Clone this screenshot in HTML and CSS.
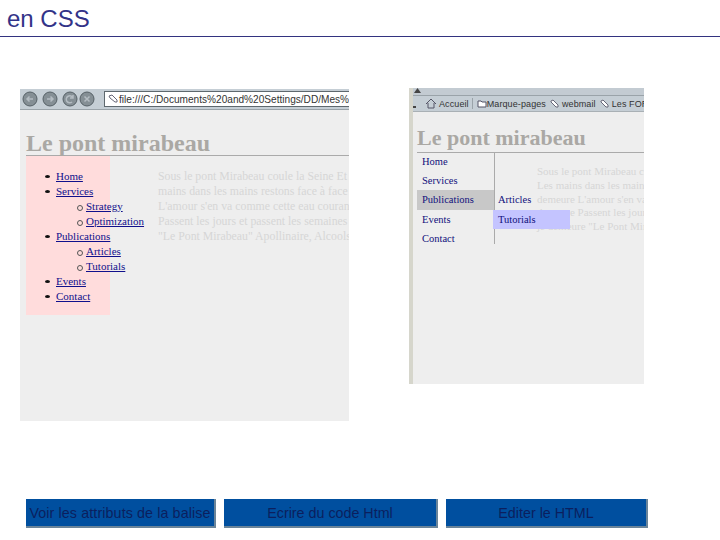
FILE: index.html
```html
<!DOCTYPE html>
<html lang="fr">
<head>
<meta charset="utf-8">
<title>en CSS</title>
<link rel="stylesheet" href="styles.css">
</head>
<body>
<div class="slide">
  <header class="head"><h1>en CSS</h1></header>
  <main class="shots">
    <section class="shot shot-a">
      <div class="nav-bar">
        <svg class="nav-icons" width="82" height="18" viewBox="0 0 82 18">
          <g fill="#858f95" stroke="#566066"><circle cx="9" cy="9" r="7"/><circle cx="29" cy="9" r="7"/><circle cx="49" cy="9" r="7"/><circle cx="66" cy="9" r="7"/></g>
          <g fill="none" stroke="#b4bcc2" stroke-width="1.5"><path d="M12 9H6M8.500 6.500 6 9l2.500 2.500"/><path d="M26 9h6M29.500 6.500 32 9l-2.500 2.500"/><path d="M52 8a3.500 3.500 0 1 0-1 4M52 5v3h-3"/><path d="m63.500 6.500 5 5m0-5-5 5"/></g>
        </svg>
        <div class="address">
          <svg width="12" height="10" viewBox="0 0 12 10"><path d="M2 2l3-1 5 5v2H8L3 4z" fill="#fff" stroke="#667"/></svg>
          <span>file:///C:/Documents%20and%20Settings/DD/Mes%2</span>
        </div>
      </div>
      <div class="page">
        <h2 class="page-title">Le pont mirabeau</h2>
        <div class="page-body">
          <nav class="side">
            <ul class="tree">
              <li><a>Home</a></li>
              <li><a>Services</a>
                <ul><li><a>Strategy</a></li><li><a>Optimization</a></li></ul>
              </li>
              <li><a>Publications</a>
                <ul><li><a>Articles</a></li><li><a>Tutorials</a></li></ul>
              </li>
              <li><a>Events</a></li>
              <li><a>Contact</a></li>
            </ul>
          </nav>
          <p class="poem">Sous le pont Mirabeau coule la Seine Et nos amours<br>mains dans les mains restons face à face Tandis que<br>L'amour s'en va comme cette eau courante L'amour<br>Passent les jours et passent les semaines Ni temps<br>"Le Pont Mirabeau" Apollinaire, Alcools (1913)</p>
        </div>
      </div>
    </section>

    <section class="shot shot-b">
      <div class="chrome-top"><svg class="scroll-up" width="7" height="5" viewBox="0 0 7 5"><path d="M3.500 0 7 5H0z" fill="#444"/></svg></div>
      <div class="bookmarks">
        <i class="scroll-mark"></i>
        <span class="bm-first">
          <svg width="12" height="11" viewBox="0 0 12 11"><path d="M1 6l5-5 5 5M3 5v5h6V5" fill="none" stroke="#556"/></svg>
          Accueil
        </span>
        <span class="bm-tight">
          <svg width="10" height="9" viewBox="0 0 10 9"><path d="M1 2h3l1 1h4v5H1z" fill="#fff" stroke="#556"/></svg>Marque-pages
        </span>
        <span>
          <svg width="10" height="10" viewBox="0 0 10 10"><path d="M1 2l2-1 5 5v2H6L1 3z" fill="#fff" stroke="#667"/></svg>
          webmail
        </span>
        <span>
          <svg width="10" height="10" viewBox="0 0 10 10"><path d="M1 2l2-1 5 5v2H6L1 3z" fill="#fff" stroke="#667"/></svg>
          Les FORUMS
        </span>
      </div>
      <div class="page-b">
        <h2 class="page-title title-b">Le pont mirabeau</h2>
        <div class="body-b">
          <ul class="menu">
            <li>Home</li>
            <li>Services</li>
            <li class="is-open">Publications
              <ul class="flyout">
                <li>Articles</li>
                <li class="is-hover">Tutorials</li>
              </ul>
            </li>
            <li>Events</li>
            <li>Contact</li>
          </ul>
          <p class="poem poem-b">Sous le pont Mirabeau coule la<br>Les mains dans les mains restons<br>demeure L'amour s'en va comme<br>demeure Passent les jours et<br>je demeure "Le Pont Mirabeau"</p>
        </div>
      </div>
    </section>
  </main>
  <footer class="actions">
    <a class="btn btn-1">Voir les attributs de la balise</a>
    <a class="btn btn-2">Ecrire du code Html</a>
    <a class="btn btn-3">Editer le HTML</a>
  </footer>
</div>
</body>
</html>
```

FILE: styles.css
```css
* { box-sizing: border-box; }
html, body { margin: 0; padding: 0; background: #fff; }
.slide { width: 720px; height: 540px; overflow: hidden; display: flex; flex-direction: column; font-family: "Liberation Sans", Arial, sans-serif; }

.head { height: 37px; border-bottom: 1px solid #333380; padding: 5px 0 0 7px; }
.head h1 { margin: 0; font-size: 24px; line-height: 27px; font-weight: 400; color: #333388; }

.shots { height: 347px; padding: 52px 0 0 20px; display: flex; align-items: flex-start; }
.shot { overflow: hidden; background: #eeeeee; flex: none; }
.shot-a { width: 329px; height: 332px; }
.shot-b { width: 235px; height: 296px; margin: -1px 0 0 60px; border-left: 4px solid #d6d6cc; }

.nav-bar { height: 21px; background: #c5ced5; border-bottom: 1px solid #9aa3a9; display: flex; align-items: center; }
.nav-icons { flex: none; margin-left: 1px; }
.address { margin-left: 1px; flex: 1; height: 16px; background: #fff; border: 1px solid #5e686e; border-right: 0; padding-left: 2px; display: flex; align-items: center; white-space: nowrap; overflow: hidden; font-size: 10.100px; color: #333; }
.address svg { flex: none; }

.page { padding: 21px 0 0 6px; }
.page-title { margin: 0; font-family: "Liberation Serif", "Times New Roman", serif; font-size: 24px; line-height: 24px; font-weight: 700; color: #aaa8a4; white-space: nowrap; border-bottom: 1px solid #aaaaaa; }
.page-body { display: flex; }

.side { width: 84px; height: 159px; flex: none; background: #ffdcdc; padding-top: 13px; }
.tree, .tree ul { list-style: none; margin: 0; padding: 0; font-family: "Liberation Serif", "Times New Roman", serif; font-size: 11px; line-height: 15px; white-space: nowrap; }
.tree > li { padding-left: 30px; position: relative; }
.tree > li::before { content: ""; position: absolute; left: 19px; top: 6px; width: 5px; height: 3px; border-radius: 50%; background: #111; }
.tree ul li { padding-left: 30px; position: relative; }
.tree ul li::before { content: ""; position: absolute; left: 21px; top: 6px; width: 4px; height: 4px; border-radius: 50%; border: 1px solid #555; }
.tree a { color: #10108c; text-decoration: underline; }

.poem { margin: 0 0 0 48px; padding-top: 13px; font-family: "Liberation Serif", "Times New Roman", serif; font-size: 11.800px; line-height: 15px; color: #d6d6d6; white-space: nowrap; }

.chrome-top { height: 8px; background: #c3cbd2; border-bottom: 1px solid #9aa3a9; padding-left: 1px; display: flex; align-items: flex-start; }
.scroll-up { display: block; flex: none; }
.bookmarks { height: 16px; background: #c5ced5; border-bottom: 1px solid #a9b0b5; display: flex; align-items: center; gap: 4px; font-size: 9px; letter-spacing: .1px; color: #333; white-space: nowrap; overflow: hidden; }
.bookmarks span { display: flex; align-items: center; gap: 2px; }
.bookmarks .bm-first { padding-right: 3px; border-right: 1px solid #9aa3a9; }
.bookmarks .bm-tight { gap: 0; }
.scroll-mark { flex: none; width: 3px; height: 2px; margin: 6px 5px 0 0; background: #444; }

.page-b { padding: 12px 0 0 4px; }
.title-b { font-size: 22px; line-height: 28px; }
.body-b { display: flex; position: relative; margin-top: -1px; }
.menu { list-style: none; margin: 0; padding: 0; width: 78px; height: 92px; flex: none; border-right: 1px solid #aaaaaa; font-family: "Liberation Serif", "Times New Roman", serif; font-size: 10.500px; color: #10107c; }
.menu li { height: 19.200px; line-height: 19px; padding-left: 5px; position: relative; white-space: nowrap; }
.is-open { background: #c8c8c8; width: 77px; }
.flyout { list-style: none; margin: 0; padding: 0; position: absolute; left: 76px; top: 0; width: 77px; z-index: 1; }
.is-hover { background: #c4c4ff; }
.poem-b { margin-left: 42px; padding-top: 13px; font-size: 11px; line-height: 13.800px; }

.actions { padding: 115px 0 0 26px; display: flex; gap: 8px; }
.btn { height: 29px; flex: none; background: #004f9f; border-right: 2px solid #6a8499; border-bottom: 2px solid #6a8499; display: flex; align-items: center; justify-content: center; font-size: 14.300px; color: #0b1f5e; white-space: nowrap; }
.btn-1 { width: 190px; letter-spacing: .1px; }
.btn-2 { width: 214px; }
.btn-3 { width: 202px; }
```
